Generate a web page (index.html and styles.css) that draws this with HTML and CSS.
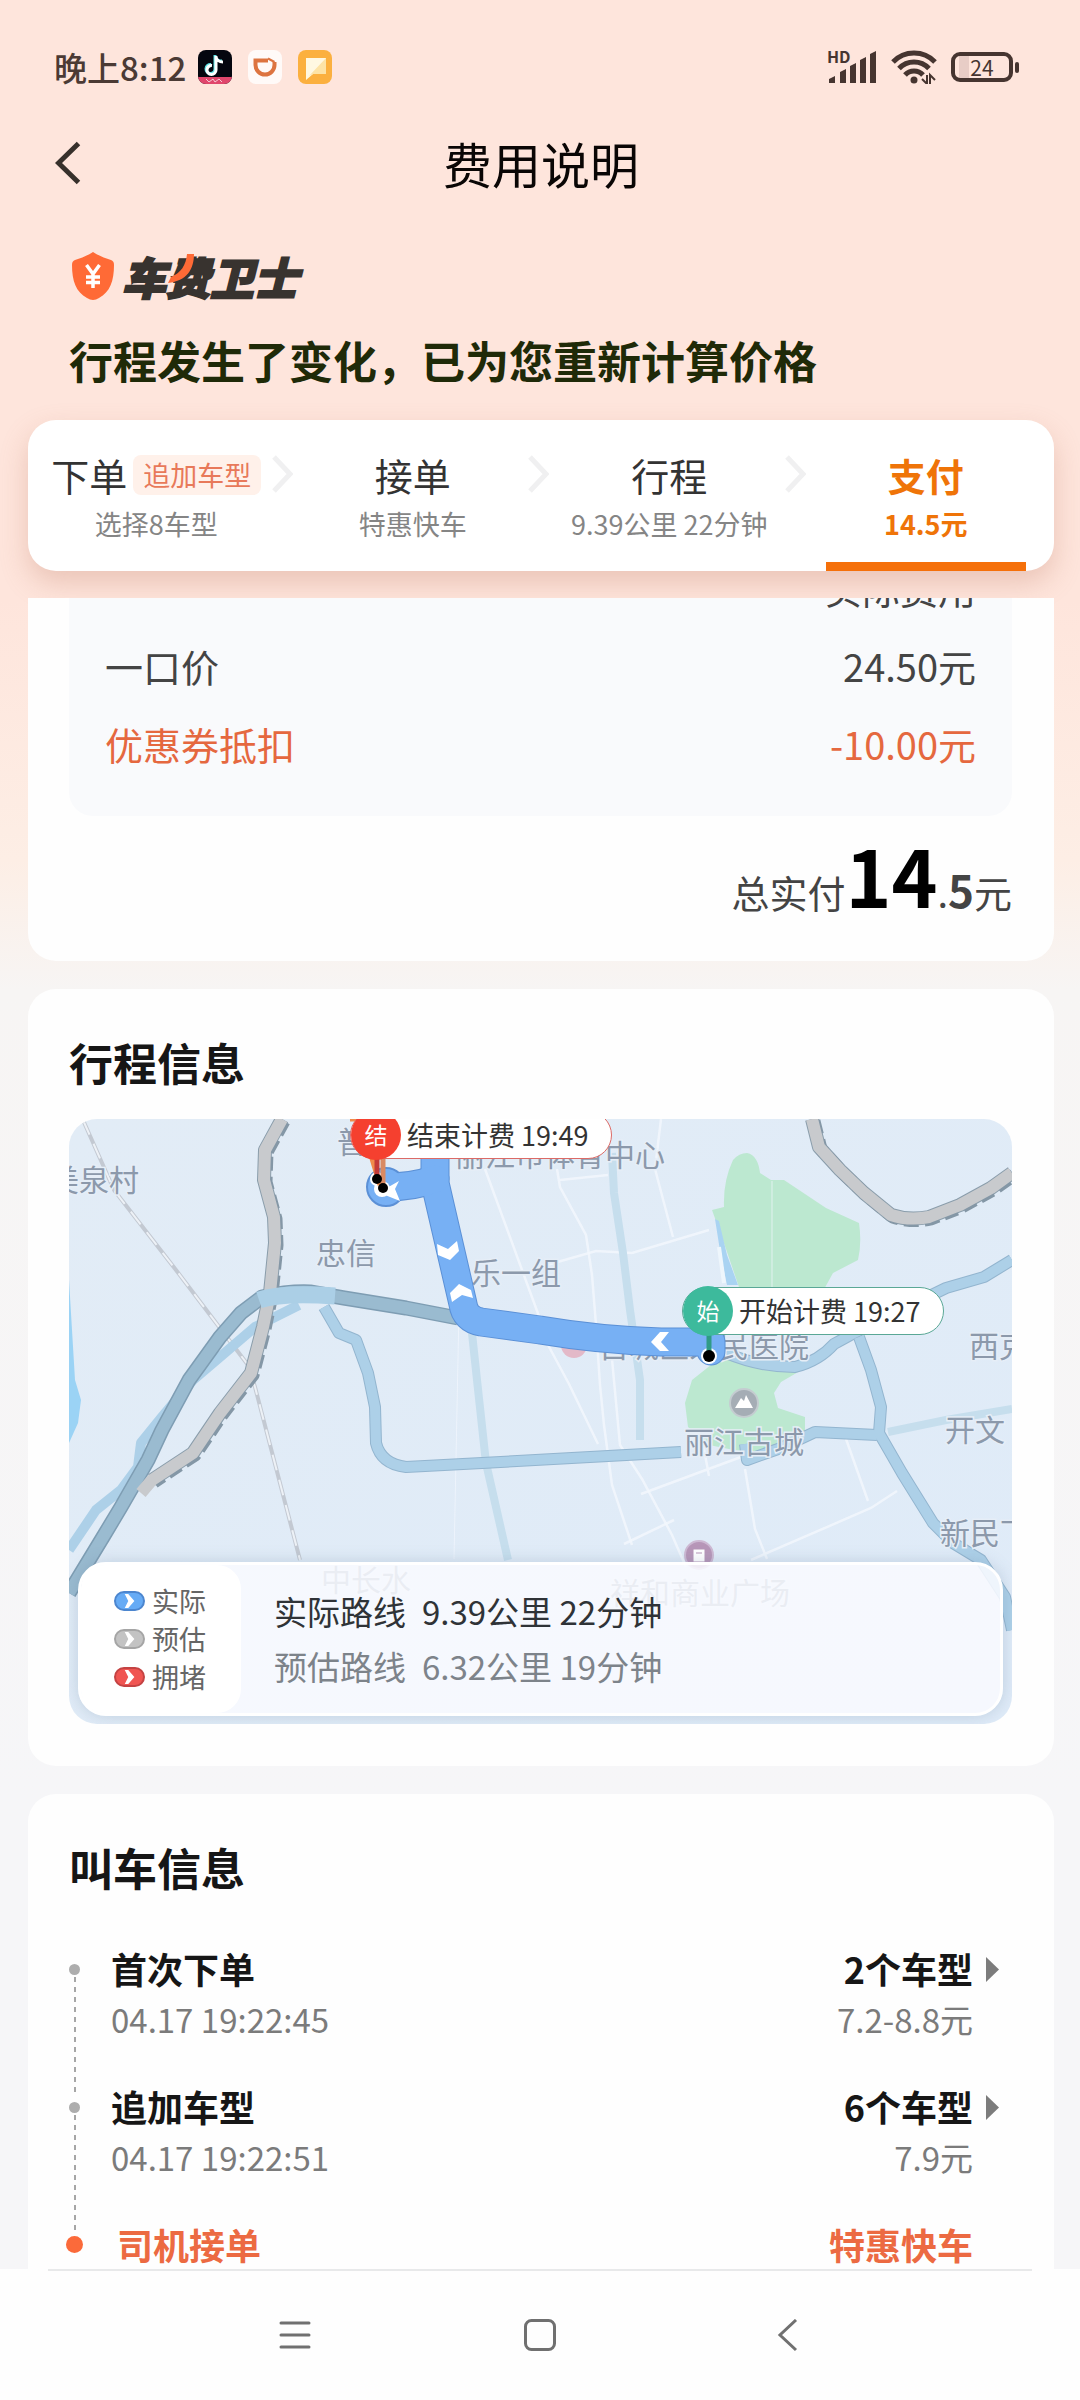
FILE: index.html
```html
<!DOCTYPE html>
<html lang="zh-CN">
<head>
<meta charset="utf-8">
<meta name="viewport" content="width=device-width, initial-scale=1">
<title>费用说明</title>
<link rel="stylesheet" href="styles.css">
</head>
<body>
<div class="app">
  <header class="top">
    <div class="status">
      <div class="status-left">
        <span class="clock">晚上8:12</span>
        <svg class="app-icon" viewBox="0 0 34 34" aria-hidden="true">
          <defs><clipPath id="tile"><rect width="34" height="34" rx="8"/></clipPath></defs>
          <g clip-path="url(#tile)">
            <rect width="34" height="34" fill="#05060f"/>
            <rect y="27" width="34" height="7" fill="#e0466c"/>
            <path d="M8 29l3 3 4-3 2 3 4-3 3 3" fill="none" stroke="#fff" stroke-opacity=".7"/>
          </g>
          <path d="M17 5v14a4.500 4.500 0 1 1-4-4.500M17 6c1 4 4 5 7 5" fill="none" stroke="#5fe3e6" stroke-width="3"/>
          <path d="M18 6v14a4.500 4.500 0 1 1-4-4.500M18 7c1 4 4 5 7 5" fill="none" stroke="#fff" stroke-width="3"/>
        </svg>
        <svg class="app-icon" viewBox="0 0 34 34" aria-hidden="true">
          <rect width="34" height="34" rx="8" fill="#fffaf8"/>
          <path d="M20 10.500H7.500V15a9.500 9.500 0 0 0 19 0v-3" fill="none" stroke="#dd7440" stroke-width="4"/>
          <path d="M20 8.500l6.500 3.500" fill="none" stroke="#dd7440" stroke-width="2"/>
        </svg>
        <svg class="app-icon" viewBox="0 0 34 34" aria-hidden="true">
          <rect width="34" height="34" rx="8" fill="#fbb03f"/>
          <path d="M8 8h20v16H15l-7 6z" fill="#fff8e2"/>
          <path d="M28 8v16H15l-4 2z" fill="#fde3a6"/>
        </svg>
      </div>
      <div class="status-right">
        <svg class="signal" viewBox="0 0 50 34" aria-hidden="true">
          <text class="hd" x="0" y="13">HD</text>
          <path d="M2 33v-4l6-3v7zM13 33V22l6-3v14zM23 33V16l6-3v20zM33 33V10l6-3v26zM43 33V4l6-3v32z" fill="#463530"/>
        </svg>
        <svg class="wifi" viewBox="0 0 46 34" aria-hidden="true">
          <g fill="none" stroke="#463530" stroke-width="5">
            <path d="M2 12a29 29 0 0 1 42 0"/><path d="M8 18.500a20.500 20.500 0 0 1 30 0"/><path d="M14 25a12 12 0 0 1 18 0"/>
          </g>
          <circle cx="23" cy="30" r="3.500" fill="#463530"/>
          <path d="M31 29l5 5v-9M44 30l-5-5v9" fill="none" stroke="#463530" stroke-width="2"/>
        </svg>
        <div class="battery"><span class="cell">24</span><i class="cap"></i></div>
      </div>
    </div>

    <div class="titlebar">
      <button class="back" type="button" aria-label="返回">
        <svg viewBox="0 0 26 44"><path d="M23.500 2.500L3.500 22l20 19.500" fill="none" stroke="#37302b" stroke-width="5"/></svg>
      </button>
      <h1>费用说明</h1>
    </div>

    <div class="brand">
      <svg class="shield" viewBox="0 0 42 48" aria-hidden="true">
        <path d="M21 0c6 4 12 6 18 8 2 1 3 2 3 5 0 16-4 27-15 33-4 2.500-8 2.500-12 0C4 40 0 29 0 13c0-3 1-4 3-5 6-2 12-4 18-8z" fill="#ff6a36"/>
        <path d="M14.500 13l6.500 9 6.500-9M21 22v14M14 25h14M14 30.500h14" fill="none" stroke="#fff" stroke-width="3.500"/>
      </svg>
      <span class="brand-name">车费卫士
        <svg class="swoosh" viewBox="0 0 26 30" aria-hidden="true"><path d="M19 0h7c0 15-7 27-26 29l3-6c10-4 15-12 16-23z" fill="#ff6a36"/></svg>
      </span>
    </div>
    <h2 class="notice">行程发生了变化，已为您重新计算价格</h2>

    <nav class="steps">
      <a class="step" href="#order">
        <span class="step-title">下单<em class="tag">追加车型</em></span><span class="step-sub">选择8车型</span>
        <svg class="sep" viewBox="0 0 22 38"><path d="M3 2l16 17L3 36" fill="none" stroke="#f0f0f1" stroke-width="5"/></svg>
      </a>
      <a class="step" href="#accept">
        <span class="step-title">接单</span><span class="step-sub">特惠快车</span>
        <svg class="sep" viewBox="0 0 22 38"><path d="M3 2l16 17L3 36" fill="none" stroke="#f0f0f1" stroke-width="5"/></svg>
      </a>
      <a class="step" href="#trip">
        <span class="step-title">行程</span><span class="step-sub">9.39公里 22分钟</span>
        <svg class="sep" viewBox="0 0 22 38"><path d="M3 2l16 17L3 36" fill="none" stroke="#f0f0f1" stroke-width="5"/></svg>
      </a>
      <a class="step active" href="#pay" aria-current="step">
        <span class="step-title">支付</span><span class="step-sub">14.5元</span>
      </a>
    </nav>
  </header>

  <main class="scroll">
    <section class="card fees" id="pay">
      <div class="fee-box">
        <table class="fee-table">
          <tr><th></th><th class="amount">实际费用</th></tr>
          <tr><td>一口价</td><td class="amount">24.50元</td></tr>
          <tr class="discount"><td>优惠券抵扣</td><td class="amount">-10.00元</td></tr>
        </table>
      </div>
      <p class="total">总实付<strong class="big">14</strong>.<strong class="dec">5</strong>元</p>
    </section>

    <section class="card" id="trip">
      <h3>行程信息</h3>
      <div class="map">
        <svg class="map-art" viewBox="0 0 943 605" preserveAspectRatio="xMidYMid slice">
          <defs>
            <linearGradient id="ground" x2="1" y2="1"><stop offset="0" stop-color="#e2ecf6"/><stop offset="1" stop-color="#dfebf8"/></linearGradient>
          </defs>
          <rect width="943" height="605" fill="url(#ground)"/>
          <!-- water and parks -->
          <path d="M0 161L6 261 12 281 9 304 0 324z" fill="#9bd3f5"/>
          <path d="M678 34C686 35 690 44 691 54L702 61 715 61 757 89 790 104Q793 124 789 141L764 154 753 174H672L657 130 643 91 655 88Q654 62 664 41 670 34 678 34z" fill="#bce8d0"/>
          <path d="M657 234L623 261 616 284 619 308 640 326 700 338 736 323V298L709 289 705 274 712 263 736 249z" fill="#bce8d0"/>
          <path d="M646 100l6 38 6 28h11l-11-30-8-34z" fill="#a9d3f2"/>
          <path d="M650 128l5 36" stroke="#eef6fc" stroke-width="4"/>
          <!-- small streets -->
          <g fill="none" stroke="#f2f7fd" stroke-width="2.500" stroke-opacity=".85">
            <path d="M488 50l3 18 26 48 6 40 4 50 4 60 4 40 8 60 20 60"/>
            <path d="M491 61l48-5M592 0l-6 50 18 68M471 148l56-16 36 2 77-23"/>
            <path d="M416 50l55 150M471 211l29 54 29 60M543 240l8 86 22 34 30 56 14 32"/>
            <path d="M572 375l100-37M555 425l50-24M634 325l6 32M676 350l10 60 12 30M682 441l120-52 26-17M777 320l22 62"/>
            <path d="M703 62v112M390 190l-5 250" stroke-width="1" stroke-opacity=".7"/>
          </g>
          <!-- railway -->
          <path d="M14 1L45 71 107 151 179 246 186 268 231 441" fill="none" stroke="#c3c9d2" stroke-width="4"/>
          <path d="M14 1L45 71 107 151 179 246 186 268 231 441" fill="none" stroke="#edf1f6" stroke-width="2" stroke-dasharray="16 10"/>
          <!-- secondary roads -->
          <g fill="none" stroke="#c6deed" stroke-width="8">
            <path d="M543 34L545 74 554 134 561 191 571 261V321"/>
            <path d="M403 214L408 261 417 344 439 441"/>
            <path d="M819 313L877 301 943 290"/>
          </g>
          <g fill="none" stroke-linejoin="round">
            <g stroke="#93b5cf" stroke-width="12">
              <path d="M255 188L270 214 287 221 299 254 306 288 307 324Q312 345 337 348L413 344 612 333"/>
              <path d="M676 325L678 341 712 329 746 313 808 316"/>
              <path d="M790 218L802 251 812 288 810 314 833 354 864 404 884 424 912 441 936 478 943 511"/>
              <path d="M657 234Q690 248 726 248 750 242 765 225 778 218 785 214L877 169 915 158 943 141"/>
            </g>
            <g stroke="#add0e8" stroke-width="10">
              <path d="M255 188L270 214 287 221 299 254 306 288 307 324Q312 345 337 348L413 344 612 333"/>
              <path d="M676 325L678 341 712 329 746 313 808 316"/>
              <path d="M790 218L802 251 812 288 810 314 833 354 864 404 884 424 912 441 936 478 943 511"/>
              <path d="M657 234Q690 248 726 248 750 242 765 225 778 218 785 214L877 169 915 158 943 141"/>
              <path d="M230 186L186 208 151 238 124 261 93 298 72 324 69 348 52 371 27 391 0 431"/>
            </g>
            <path d="M0 474L34 418 52 388 79 341 93 311 120 261 151 218 172 194 193 178Q220 172 241 173L275 179 337 189 389 199" stroke="#7e9db3" stroke-width="15"/>
            <path d="M0 474L34 418 52 388 79 341 93 311 120 261 151 218 172 194 193 178Q220 172 241 173L275 179 337 189 389 199" stroke="#9abbd0" stroke-width="12"/>
            <!-- ring road -->
            <g stroke="#8a9dab" stroke-width="14">
              <path d="M213 0L196 31 195 61 205 98 206 124 203 154 201 174 194 208 182 254 151 294 124 334 83 361"/>
              <path d="M743 0L750 28 771 51 795 74 822 96Q840 102 860 98L891 86 922 69 943 54"/>
            </g>
            <g stroke="#8497a6" stroke-width="13" stroke-dasharray="14 6" transform="translate(2 2)">
              <path d="M213 0L196 31 195 61 205 98 206 124 203 154 201 174 194 208 182 254 151 294 124 334 83 361"/>
              <path d="M743 0L750 28 771 51 795 74 822 96Q840 102 860 98L891 86 922 69 943 54"/>
            </g>
            <g stroke="#c8cacd" stroke-width="12">
              <path d="M213 0L196 31 195 61 205 98 206 124 203 154 201 174 194 208 182 254 151 294 124 334 83 361 72 374"/>
              <path d="M743 0L750 28 771 51 795 74 822 96Q840 102 860 98L891 86 922 69 943 54"/>
            </g>
            <path d="M190 181Q214 173 266 177" stroke="#abcfe6" stroke-width="17"/>
          </g>
          <!-- points of interest -->
          <circle cx="505" cy="226" r="13" fill="#e3b9c8"/>
          <circle cx="675" cy="284" r="14" fill="#a5adb5" stroke="#c4ccd0" stroke-width="2"/>
          <path d="M666 289l6-10 3 3 2-6 7 13z" fill="#fff"/>
          <circle cx="630" cy="436" r="14" fill="#b796b8" stroke="#cdb9d3" stroke-width="2"/>
          <path d="M624 430h12v13h-12zM627 434h6" fill="#fff" stroke="#b796b8"/>
          <g class="place">
            <text x="-20" y="72">美泉村</text>
            <text x="268" y="34">普济</text>
            <text x="386" y="47">丽江市体育中心</text>
            <text x="247" y="145">忠信</text>
            <text x="402" y="165">乐一组</text>
            <text x="530" y="238">古城区人民医院</text>
            <text x="615" y="334">丽江古城</text>
            <text x="900" y="238">西克</text>
            <text x="876" y="322">开文</text>
            <text x="871" y="425">新民下</text>
            <text x="252" y="472">中长水</text>
            <text x="541" y="485">祥和商业广场</text>
          </g>
          <!-- driven route -->
          <g fill="none" stroke-linejoin="round" stroke-linecap="round">
            <path d="M366 30V64L394 185Q396 200 412 203L471 211Q530 221 592 223H642V232" stroke="#5b90d6" stroke-width="29"/>
            <path d="M366 60Q345 68 316 68" stroke="#5b90d6" stroke-width="29"/>
            <circle cx="317" cy="68" r="19" fill="#77b0f4" stroke="#5b90d6" stroke-width="2"/>
            <path d="M366 30V64L394 185Q396 200 412 203L471 211Q530 221 592 223H642V232" stroke="#77b0f4" stroke-width="27"/>
            <path d="M366 60Q345 68 316 68" stroke="#77b0f4" stroke-width="27"/>
          </g>
          <g fill="#fff">
            <path d="M368 125l11 5 9-8 2 10-9 9-12-5z"/>
            <path d="M381 174l9-9 12 6 2 8-11-3-10 7z"/>
            <path d="M582 223l9-10h9l-8 10 8 9h-9z"/>
            <path d="M316 70l14-8-4 8 5 12-15-6z"/>
            <circle cx="308" cy="60" r="7"/><circle cx="313" cy="70" r="8"/><circle cx="640" cy="237" r="8"/>
          </g>
          <path d="M281 0h10l20 66" fill="none" stroke="#f08b4b" stroke-width="5"/>
          <path d="M314 40v28" stroke="#d98a63" stroke-width="5"/>
          <path d="M308 40v20" stroke="#c33a38" stroke-width="5"/>
          <path d="M640 212v22" stroke="#2f9b86" stroke-width="5"/>
          <circle cx="308" cy="60" r="5"/><circle cx="314" cy="69" r="5"/><circle cx="640" cy="237" r="6"/>
        </svg>
        <div class="pin pin-end"><b>结</b><span>结束计费 19:49</span></div>
        <div class="pin pin-start"><b>始</b><span>开始计费 19:27</span></div>
        <div class="panel">
          <ul class="legend">
            <li><i class="chip blue"><svg viewBox="0 0 12 16"><path d="M0 0h4l7 8-7 8H0l4-8z" fill="#fff"/></svg></i>实际</li>
            <li><i class="chip gray"><svg viewBox="0 0 12 16"><path d="M0 0h4l7 8-7 8H0l4-8z" fill="#fff"/></svg></i>预估</li>
            <li><i class="chip red"><svg viewBox="0 0 12 16"><path d="M0 0h4l7 8-7 8H0l4-8z" fill="#fff"/></svg></i>拥堵</li>
          </ul>
          <dl class="routes">
            <div><dt>实际路线</dt><dd>9.39公里 22分钟</dd></div>
            <div class="muted"><dt>预估路线</dt><dd>6.32公里 19分钟</dd></div>
          </dl>
        </div>
      </div>
    </section>

    <section class="card" id="order">
      <h3>叫车信息</h3>
      <ol class="timeline">
        <li>
          <span class="marker"></span>
          <div class="what"><b>首次下单</b><time>04.17 19:22:45</time></div>
          <div class="cars"><b>2个车型</b><span>7.2-8.8元</span></div>
          <button class="more" type="button" aria-label="查看2个车型"><svg viewBox="0 0 13 25"><path d="M0 0l13 12.500L0 25z" fill="#7c7c7c"/></svg></button>
        </li>
        <li>
          <span class="marker"></span>
          <div class="what"><b>追加车型</b><time>04.17 19:22:51</time></div>
          <div class="cars"><b>6个车型</b><span>7.9元</span></div>
          <button class="more" type="button" aria-label="查看6个车型"><svg viewBox="0 0 13 25"><path d="M0 0l13 12.500L0 25z" fill="#7c7c7c"/></svg></button>
        </li>
        <li class="current" id="accept">
          <span class="marker"></span>
          <div class="what"><b>司机接单</b></div>
          <div class="cars"><b>特惠快车</b></div>
        </li>
      </ol>
    </section>
  </main>

  <footer class="sysnav">
    <div class="sysnav-keys">
      <button type="button" aria-label="菜单"><svg viewBox="0 0 34 34"><path d="M4 4h28M4 16h28M4 28h28" fill="none" stroke="#707070" stroke-width="3" stroke-linecap="round"/></svg></button>
      <button type="button" aria-label="主页"><svg viewBox="0 0 34 34"><rect x="2.500" y="1.500" width="29" height="29" rx="6" fill="none" stroke="#707070" stroke-width="3"/></svg></button>
      <button type="button" aria-label="后退"><svg viewBox="0 0 34 34"><path d="M27 1L11 16l16 15" fill="none" stroke="#707070" stroke-width="3"/></svg></button>
    </div>
  </footer>
</div>
</body>
</html>
```
FILE: styles.css
```css
* { box-sizing: border-box; margin: 0; padding: 0; }

body {
  font-family: "Noto Sans CJK SC", "Noto Sans", sans-serif;
  font-size: 38px;
  color: #444;
  background: #f6f6f7;
}

svg { display: block; }
button { border: 0; background: none; font: inherit; }
a { color: inherit; text-decoration: none; }
ul, ol { list-style: none; }

.app {
  display: flex;
  flex-direction: column;
  height: 100vh;
  overflow: hidden;
  background: linear-gradient(#fee5dc 0, #fee5dc 600px, #fdeee5 860px, #f7f5f4 990px, #f6f6f8 1800px);
}

.top { flex: none; padding: 34px 26px 27px 28px; }

/* status bar */
.status {
  display: flex;
  justify-content: space-between;
  align-items: center;
  height: 66px;
  padding: 0 35px 0 26px;
}
.status-left, .status-right { display: flex; align-items: center; }
.status-left { gap: 16px; }
.status-right { gap: 14px; }
.clock { font-size: 33px; line-height: 66px; font-weight: 500; color: #4b3a34; margin-right: -4px; }
.app-icon { width: 34px; height: 34px; }
.signal { width: 50px; height: 34px; overflow: visible; }
.hd { font-size: 16px; font-weight: 700; fill: #463530; }
.wifi { width: 46px; height: 34px; }
.battery { display: flex; align-items: center; gap: 2px; }
.cell {
  width: 62px;
  height: 30px;
  border: 4px solid #463530;
  border-radius: 9px;
  background: linear-gradient(90deg, transparent 4px, #e8cdc6 4px, #e8cdc6 14px, transparent 14px);
  font-size: 21px;
  line-height: 22px;
  text-align: center;
  color: #463530;
}
.cap { width: 4px; height: 11px; border-radius: 2px; background: #463530; }

/* title bar */
.titlebar {
  display: grid;
  grid-template-columns: 60px 1fr 60px;
  align-items: center;
  height: 126px;
}
.back { display: flex; justify-content: center; width: 80px; height: 80px; align-items: center; }
.back svg { width: 26px; height: 44px; }
h1 { font-size: 49px; line-height: 66px; font-weight: 400; text-align: center; color: #0a0605; }

.brand { display: flex; align-items: center; gap: 8px; height: 46px; margin: 27px 44px 0; }
.shield { width: 42px; height: 48px; }
.brand-name {
  position: relative;
  font-size: 44px;
  line-height: 44px;
  font-weight: 900;
  font-style: italic;
  color: #38332f;
  -webkit-text-stroke: 2px #38332f;
}
.swoosh { position: absolute; left: 46px; top: 0; width: 26px; height: 30px; }

.notice {
  margin: 28px 41px 0;
  font-size: 44px;
  line-height: 66px;
  font-weight: 700;
  color: #1f2a08;
}

/* progress steps */
.steps {
  display: grid;
  grid-template-columns: repeat(4, 1fr);
  margin-top: 27px;
  height: 151px;
  border-radius: 28px;
  background: #fff;
  box-shadow: 0 12px 28px rgba(190, 120, 95, .3);
}
.step {
  position: relative;
  display: flex;
  flex-direction: column;
  align-items: center;
  padding-top: 30px;
}
.step-title {
  display: flex;
  align-items: center;
  gap: 6px;
  height: 50px;
  line-height: 50px;
  color: #333;
}
.tag {
  padding: 0 10px;
  border-radius: 8px;
  background: #fff1ea;
  font-size: 27px;
  line-height: 40px;
  font-style: normal;
  color: #e8795a;
}
.step-sub { font-size: 27px; line-height: 48px; color: #858585; }
.sep { position: absolute; right: -8px; top: 35px; width: 22px; height: 38px; }
.active .step-title, .active .step-sub { color: #ef7408; font-weight: 700; }
.active::after {
  content: "";
  position: absolute;
  bottom: 0;
  width: 200px;
  height: 9px;
  background: #f5700a;
}

/* scrolled content */
.scroll {
  flex: 1;
  min-height: 0;
  overflow: hidden;
  display: flex;
  flex-direction: column;
  gap: 28px;
  padding: 0 26px 0 28px;
}
.card { flex: none; padding: 40px 42px 42px 41px; border-radius: 28px; background: #fefefe; }
h3 { font-size: 44px; line-height: 66px; font-weight: 700; color: #161616; }

.fees { padding-top: 0; padding-bottom: 39px; border-radius: 0 0 28px 28px; overflow: hidden; }
.fee-box { margin-top: -50px; padding: 0 36px 34px; border-radius: 24px; background: #f9fafc; }
.fee-table { width: 100%; border-collapse: collapse; }
.fee-table tr { height: 78px; }
.fee-table th { font-weight: 400; }
.fee-table td { text-align: left; }
.fee-table .amount { text-align: right; }
.discount { color: #e5683f; }
.total { margin-top: 46px; line-height: 60px; text-align: right; }
.total strong { line-height: 0; }
.big { font-size: 78px; color: #000; }
.dec { font-size: 44px; }

/* map */
.map {
  position: relative;
  height: 605px;
  margin-top: 24px;
  border-radius: 28px;
  overflow: hidden;
}
.map-art { width: 100%; height: 100%; }
.place { font-size: 30px; fill: #8c99ab; stroke: #e6eef7; stroke-width: 3px; paint-order: stroke; }
.pin {
  position: absolute;
  display: flex;
  align-items: center;
  height: 48px;
  padding-right: 22px;
  border: 1px solid;
  border-radius: 24px;
  background: #fff;
  font-size: 27px;
  line-height: 46px;
}
.pin span { color: #333; }
.pin b {
  width: 50px;
  height: 50px;
  margin-right: 6px;
  border-radius: 50%;
  font-size: 23px;
  line-height: 48px;
  font-weight: 400;
  text-align: center;
  color: #fff;
}
.pin-end { left: 281px; top: -8px; border-color: #dc6a66; }
.pin-end b { background: #f5402f; }
.pin-start { left: 613px; top: 168px; border-color: #5aa896; }
.pin-start b { background: #3dba9c; }

.panel {
  position: absolute;
  left: 9px;
  right: 9px;
  bottom: 8px;
  display: flex;
  height: 154px;
  border: 3px solid #fff;
  border-radius: 28px;
  background: rgba(249, 250, 255, .86);
  box-shadow: 0 0 16px rgba(90, 120, 150, .25);
}
.legend {
  display: flex;
  flex-direction: column;
  justify-content: center;
  width: 160px;
  padding-left: 33px;
  border-radius: 24px;
  background: #fff;
  font-size: 27px;
  line-height: 38px;
  color: #666;
}
.legend li { display: flex; align-items: center; gap: 7px; }
.chip {
  display: flex;
  align-items: center;
  justify-content: center;
  width: 31px;
  height: 20px;
  border: 2px solid;
  border-radius: 10px;
}
.chip svg { width: 12px; height: 14px; }
.blue { background: #66abf5; border-color: #4c86cf; }
.gray { background: #c3c3c3; border-color: #a5a5a5; }
.red { background: #f05552; border-color: #c44343; }
.routes {
  display: flex;
  flex-direction: column;
  justify-content: center;
  padding-left: 33px;
  font-size: 33px;
  line-height: 55px;
  color: #2f3337;
}
.routes div { display: flex; gap: 16px; }
.routes .muted { color: #7d838a; }

/* order timeline */
.timeline { margin-top: 42px; }
.timeline li { display: grid; grid-template-columns: 42px 1fr auto 39px; min-height: 138px; }
.timeline b { font-size: 36px; line-height: 52px; font-weight: 700; color: #161616; }
.timeline time, .cars span { font-size: 33px; line-height: 50px; color: #7b7b7b; }
.what, .cars { display: flex; flex-direction: column; }
.cars { align-items: flex-end; }
.marker { display: flex; flex-direction: column; align-items: center; width: 11px; margin: 22px 0 -18px; }
.marker::before { content: ""; width: 11px; height: 11px; border-radius: 50%; background: #adadad; }
.marker::after {
  content: "";
  flex: 1;
  width: 2px;
  margin: 2px 0;
  background: repeating-linear-gradient(#a6a6a6 0 5px, transparent 5px 10px);
}
.more { align-self: start; display: flex; justify-content: center; align-items: center; height: 54px; }
.more svg { width: 13px; height: 25px; }
.current .marker { margin-top: 18px; }
.current .marker::before { flex: none; width: 17px; height: 17px; background: #fb6a3a; }
.current .marker::after { content: none; }
.current b { color: #ec6a42; }
.current .what { padding-left: 6px; }

/* system navigation */
.sysnav { flex: none; padding: 0 48px; background: #fefefe; }
.sysnav-keys {
  display: grid;
  grid-template-columns: repeat(3, 25%);
  justify-content: center;
  height: 131px;
  border-top: 2px solid #e8e9ea;
}
.sysnav button { display: flex; justify-content: center; align-items: center; }
.sysnav svg { width: 34px; height: 34px; }
```
